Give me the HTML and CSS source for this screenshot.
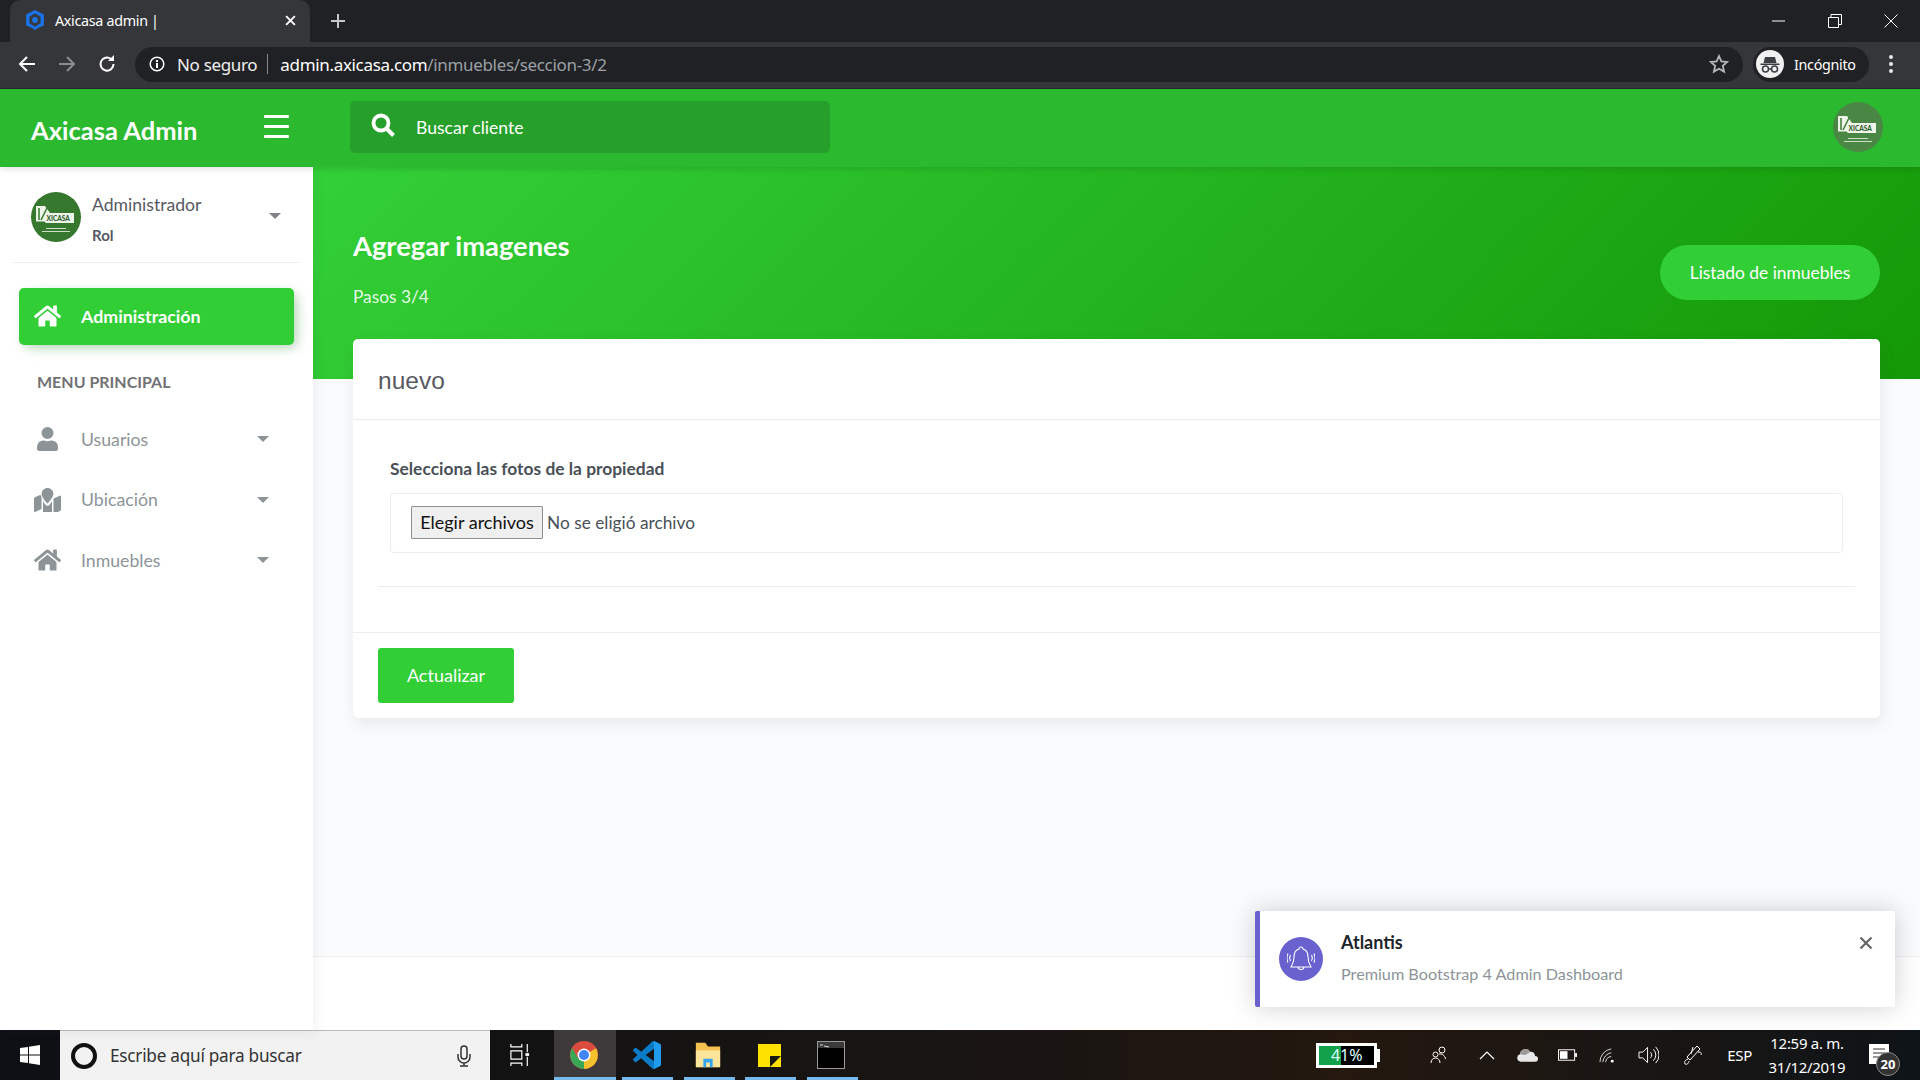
FILE: index.html
```html
<!DOCTYPE html>
<html lang="es">
<head>
<meta charset="utf-8">
<title>Axicasa admin</title>
<link rel="stylesheet" href="styles.css">
</head>
<body>
<svg class="defs" width="0" height="0">
  <symbol id="home" viewBox="0 0 576 512"><path d="M280 148 96 300v164a16 16 0 0 0 16 16l112-.3a16 16 0 0 0 16-16V368a16 16 0 0 1 16-16h64a16 16 0 0 1 16 16v95.6a16 16 0 0 0 16 16l112 .4a16 16 0 0 0 16-16V300L296 148a12 12 0 0 0-16 0zM572 251l-84-69V44a12 12 0 0 0-12-12h-56a12 12 0 0 0-12 12v72L318 43a48 48 0 0 0-61 0L4 251a12 12 0 0 0-2 17l26 31a12 12 0 0 0 17 2L280 107a12 12 0 0 1 16 0l235 194a12 12 0 0 0 17-2l26-31a12 12 0 0 0-2-17z"/></symbol>
  <symbol id="caret" viewBox="0 0 12 6"><path d="M0 0h12L6 6z"/></symbol>
</svg>

<header class="chrome-tabs">
  <div class="tab">
    <svg class="favicon" viewBox="0 0 16 18"><path d="M8 0 16 4v10l-5 2-3 2-3-2-5-2V4z" fill="#1a73e8"/><path d="M8 3 13 6v6l-5 3-5-3V6z" fill="#353a40"/><circle cx="8" cy="9" r="2.6" fill="#1a73e8"/></svg>
    <span class="tab-title">Axicasa admin |</span>
    <svg class="tab-close" viewBox="0 0 10 10"><path d="M1 1l8 8M9 1 1 9" stroke="#fff" stroke-width="1.7"/></svg>
  </div>
  <svg class="new-tab" viewBox="0 0 16 16"><path d="M8 1v14M1 8h14" stroke="#c5c7ca" stroke-width="2"/></svg>
  <div class="window-controls">
    <svg viewBox="0 0 14 14"><path d="M0 7h13" stroke="#fff"/></svg>
    <svg viewBox="0 0 14 14"><path d="M.5 3.500h10v10H.5zM3 3V.5h10.500v10H11" stroke="#fff" fill="none"/></svg>
    <svg viewBox="0 0 14 14"><path d="M.5.5l13 13M13.500.5l-13 13" stroke="#fff" fill="none"/></svg>
  </div>
</header>

<nav class="chrome-bar">
  <svg class="nav-icon" viewBox="0 0 18 18"><path d="M17 9H3M9 2 2 9l7 7" stroke="#fff" stroke-width="2" fill="none"/></svg>
  <svg class="nav-icon" viewBox="0 0 18 18"><path d="M1 9h14M9 2l7 7-7 7" stroke="#8a8c90" stroke-width="2" fill="none"/></svg>
  <svg class="nav-icon" viewBox="0 0 18 18"><path d="M15.500 9A6.500 6.500 0 1 1 13 4" stroke="#fff" stroke-width="2" fill="none"/><path d="M10 6h6V0z" fill="#fff"/></svg>
  <div class="omnibox">
    <svg class="info" viewBox="0 0 16 16"><circle cx="8" cy="8" r="6.800" stroke="#fff" stroke-width="1.500" fill="none"/><path d="M7 4h2v2H7zM7 7h2v5H7z" fill="#fff"/></svg>
    <span class="not-secure">No seguro</span>
    <span class="omni-sep"></span>
    <span class="url">admin.axicasa.com<span class="url-path">/inmuebles/seccion-3/2</span></span>
    <svg class="star" viewBox="0 0 20 20"><path d="m10 2 2.400 5.400 5.800.6-4.400 3.900 1.300 5.700L10 14.700l-5.100 2.900 1.300-5.700L1.800 8l5.800-.6z" stroke="#b5b7ba" stroke-width="1.800" fill="none"/></svg>
  </div>
  <div class="incognito">
    <svg class="incognito-icon" viewBox="0 0 28 28"><circle cx="14" cy="14" r="14" fill="#f1f1f1"/><path d="M9 7h10l1.500 6h-13zM4.500 13.500h19V15h-19z" fill="#3a3d42"/><circle cx="9.500" cy="19" r="3" stroke="#3a3d42" stroke-width="1.500" fill="none"/><circle cx="18.500" cy="19" r="3" stroke="#3a3d42" stroke-width="1.500" fill="none"/><path d="M12.500 19h3" stroke="#3a3d42" stroke-width="1.500"/></svg>
    <span>Incógnito</span>
  </div>
  <div class="kebab"><i></i><i></i><i></i></div>
</nav>

<div class="app-header">
  <div class="brand-wrap">
    <span class="brand">Axicasa Admin</span>
    <div class="burger"><i></i><i></i><i></i></div>
  </div>
  <div class="search">
    <svg class="search-icon" viewBox="0 0 24 24"><circle cx="10" cy="10" r="7.500" stroke="#fff" stroke-width="3.800" fill="none"/><path d="m15.500 15.500 7 7" stroke="#fff" stroke-width="4"/></svg>
    <span>Buscar cliente</span>
  </div>
  <svg class="header-avatar" viewBox="0 0 50 50">
    <circle class="logo-disc" cx="25" cy="25" r="25"/>
    <path d="M5 14h9l5 7h24v10H15l-1.500-1.500H5z" fill="#eef4ea"/>
    <path d="M8 16v12M10 28l6-12" stroke="#3b7a35" stroke-width="1.500" fill="none"/>
    <text x="15.500" y="29" class="logo-text">XICASA</text>
    <rect x="15" y="36" width="20" height="1" fill="#cfe0ca"/><rect x="11" y="39" width="28" height="1" fill="#cfe0ca"/>
  </svg>
</div>

<div class="layout">
  <aside class="sidebar">
    <div class="user">
      <svg class="user-avatar" viewBox="0 0 50 50">
        <circle class="logo-disc" cx="25" cy="25" r="25"/>
        <path d="M5 14h9l5 7h24v10H15l-1.500-1.500H5z" fill="#eef4ea"/>
        <path d="M8 16v12M10 28l6-12" stroke="#2f7a2d" stroke-width="1.500" fill="none"/>
        <text x="15.500" y="29" class="logo-text">XICASA</text>
        <rect x="15" y="36" width="20" height="1" fill="#cfe0ca"/><rect x="11" y="39" width="28" height="1" fill="#cfe0ca"/>
      </svg>
      <div class="user-info">
        <span class="user-name">Administrador</span>
        <span class="user-role">Rol</span>
      </div>
      <svg class="caret user-caret"><use href="#caret"/></svg>
    </div>
    <div class="menu-active">
      <svg class="menu-icon"><use href="#home"/></svg>
      <span>Administración</span>
    </div>
    <div class="menu-title">MENU PRINCIPAL</div>
    <div class="menu-item">
      <svg class="menu-icon" viewBox="0 0 448 512"><path d="M224 256a128 128 0 1 0 0-256 128 128 0 0 0 0 256zm90 32h-17a174 174 0 0 1-146 0h-17A134 134 0 0 0 0 422v42a48 48 0 0 0 48 48h352a48 48 0 0 0 48-48v-42a134 134 0 0 0-134-134z"/></svg>
      <span>Usuarios</span>
      <svg class="caret"><use href="#caret"/></svg>
    </div>
    <div class="menu-item">
      <svg class="menu-icon" viewBox="0 0 576 512"><path d="M288 0c-69 0-126 56-126 126 0 56 82 158 113 196a16 16 0 0 0 25 0c31-38 114-140 114-196C414 56 357 0 288 0zM20 195A32 32 0 0 0 0 225v271c0 11 11 19 22 15l138-63V192c-9-16-16-32-21-47zm268 184c-14 0-27-6-37-18-19-24-40-51-59-78v229l192 64V283c-19 27-40 54-59 78-10 12-23 18-37 18zm266-216-138 63v320l140-56a32 32 0 0 0 20-30V178c0-11-11-19-22-15z"/></svg>
      <span>Ubicación</span>
      <svg class="caret"><use href="#caret"/></svg>
    </div>
    <div class="menu-item">
      <svg class="menu-icon"><use href="#home"/></svg>
      <span>Inmuebles</span>
      <svg class="caret"><use href="#caret"/></svg>
    </div>
  </aside>

  <main class="content">
    <section class="banner">
      <div>
        <h1>Agregar imagenes</h1>
        <p>Pasos 3/4</p>
      </div>
      <a class="pill">Listado de inmuebles</a>
    </section>
    <section class="card">
      <div class="card-head">nuevo</div>
      <div class="card-body">
        <label class="field-label">Selecciona las fotos de la propiedad</label>
        <div class="file-box">
          <span class="file-btn">Elegir archivos</span>
          <span class="file-name">No se eligió archivo</span>
        </div>
        <hr class="rule">
      </div>
      <div class="card-foot"><a class="submit">Actualizar</a></div>
    </section>
    <div class="spacer"></div>
    <footer class="page-foot"></footer>
  </main>
</div>

<div class="toast">
  <div class="toast-icon">
    <svg viewBox="0 0 28 30"><g stroke="#fff" stroke-width="1.100" fill="none"><path d="M14 3a2 2 0 0 0-2 2c-4 1-5 4-5 8 0 5-1 7-3 10h20c-2-3-3-5-3-10 0-4-1-7-5-8a2 2 0 0 0-2-2zM11 23a3 2.500 0 0 0 6 0"/><path d="M3.500 11q-1.500 3 0 6M1 9.500q-2 4.500 0 9M24.500 11q1.500 3 0 6M27 9.500q2 4.500 0 9"/></g></svg>
  </div>
  <div class="toast-text">
    <strong>Atlantis</strong>
    <span>Premium Bootstrap 4 Admin Dashboard</span>
  </div>
  <svg class="toast-close" viewBox="0 0 14 14"><path d="M1.500 1.500l11 11M12.500 1.500l-11 11" stroke="#666" stroke-width="2.200"/></svg>
</div>

<div class="taskbar">
  <div class="start">
    <svg viewBox="0 0 20 20"><path d="M0 3l8-1v7.500H0zM9 1.800 20 0v9.500H9zM0 10.500h8V18l-8-1zM9 10.500h11V20L9 18.200z" fill="#fff"/></svg>
  </div>
  <div class="task-search">
    <span class="cortana"></span>
    <span class="task-search-text">Escribe aquí para buscar</span>
    <svg class="mic" viewBox="0 0 14 22"><rect x="4" y="1" width="6" height="13" rx="3" fill="none" stroke="#333" stroke-width="1.500"/><path d="M1 9v3a6 6 0 0 0 12 0V9M7 18v3M3 21h8" stroke="#333" stroke-width="1.500" fill="none"/></svg>
  </div>
  <div class="task-apps">
    <div class="app app-view"><svg viewBox="0 0 22 24"><path d="M1 0v3h12V0M1 24v-3h12v3M1 7.500h12v9H1zM19 0v9M19 14v10" stroke="#fff" stroke-width="1.300" fill="none"/><rect x="17" y="10" width="4" height="3" fill="#fff"/></svg></div>
    <div class="app app-chrome"><svg viewBox="0 0 28 28"><circle cx="14" cy="14" r="14" fill="#dd4b3e"/><path d="M14 14 2 7A14 14 0 0 0 14 28z" fill="#3aa757"/><path d="M14 14v14A14 14 0 0 0 26 7z" fill="#f5c12e"/><path d="M14 14 26.100 7H14zM14 14 2 7l6 10z" fill="#dd4b3e"/><path d="M14 14l-6 3 6 11z" fill="#3aa757"/><path d="M14 14l6 3-6 11z" fill="#f5c12e"/><circle cx="14" cy="14" r="6.500" fill="#fff"/><circle cx="14" cy="14" r="5" fill="#4285f4"/></svg></div>
    <div class="app app-on"><svg viewBox="0 0 24 24"><path d="M23.150 2.587 18.210.21a1.494 1.494 0 0 0-1.705.29l-9.460 8.630-4.120-3.128a.999.999 0 0 0-1.276.057L.327 7.261A1 1 0 0 0 .326 8.740L3.899 12 .326 15.260a1 1 0 0 0 .001 1.479L1.650 17.940a.999.999 0 0 0 1.276.057l4.120-3.128 9.460 8.630a1.492 1.492 0 0 0 1.704.29l4.942-2.377A1.500 1.500 0 0 0 24 20.060V3.939a1.500 1.500 0 0 0-.850-1.352zm-5.146 14.861L10.826 12l7.178-5.448v10.896z" fill="#0a7cc7"/><path d="M18 0v6.550V17.450V24l5.150-2.500A1.500 1.500 0 0 0 24 20.060V3.940a1.500 1.500 0 0 0-.850-1.350z" fill="#1f9cf0"/></svg></div>
    <div class="app app-on"><svg viewBox="0 0 28 30"><path d="M1 2h10l3 4h13v22H1z" fill="#f2c14e"/><path d="M1 10h26v18H1z" fill="#fde59b"/><path d="M9 28v-9h10v9h-3v-5h-4v5z" fill="#37a6ee"/></svg></div>
    <div class="app app-on app-sticky"><svg viewBox="0 0 23 23"><path d="M0 0h23v23H0z" fill="#ffe100"/><path d="M12 12h11L12 23z" fill="#1a1a10"/></svg></div>
    <div class="app app-on"><svg viewBox="0 0 28 28"><rect x=".5" y=".5" width="27" height="27" fill="#000" stroke="#9a9a9a"/><path d="M1 1h26v6H1z" fill="#3b3b3b"/><path d="M3 4h3M7 5l5 1" stroke="#ddd" fill="none"/></svg></div>
  </div>
  <div class="tray">
    <div class="battery-widget">
      <div class="battery-body"><span class="battery-fill"></span><span class="battery-text">41%</span></div>
      <i class="battery-tip"></i>
    </div>
    <svg class="tray-icon people" viewBox="0 0 20 20"><circle cx="13" cy="5" r="3" stroke="#fff" fill="none"/><circle cx="6.500" cy="9.500" r="2.500" stroke="#fff" fill="none"/><path d="M2 18c0-3 2-5 4.500-5s4.500 2 4.500 5M10 9c3-.5 6 1.500 6.500 5" stroke="#fff" fill="none"/></svg>
    <svg class="tray-icon chevron" viewBox="0 0 16 10"><path d="M1 9l7-7 7 7" stroke="#fff" stroke-width="1.200" fill="none"/></svg>
    <svg class="tray-icon cloud" viewBox="0 0 22 14"><path d="M4 14a4 4 0 0 1-1-7.800A6 6 0 0 1 14 3.500a5 5 0 0 1 5 4.500 3 3 0 0 1 0 6z" fill="#e8e8e8"/><path d="M3 6.200A6 6 0 0 1 14 3.500L9 7z" fill="#9a9a9a"/></svg>
    <svg class="tray-icon batt" viewBox="0 0 20 12"><rect x=".5" y=".5" width="17" height="11" fill="none" stroke="#fff"/><rect x="2" y="2" width="8" height="8" fill="#fff"/><rect x="18" y="4" width="2" height="4" fill="#fff"/></svg>
    <svg class="tray-icon wifi" viewBox="0 0 18 18"><path d="M1 16A14 14 0 0 1 13 2M4 16A11 11 0 0 1 13 6M7 16a7 7 0 0 1 6-6" stroke="#ddd" fill="none"/><circle cx="14" cy="15" r="1.500" fill="#fff"/></svg>
    <svg class="tray-icon sound" viewBox="0 0 22 20"><path d="M1 7h4l5-5v16l-5-5H1z" stroke="#fff" fill="none"/><path d="M13 7a4 4 0 0 1 0 6M16 4a8 8 0 0 1 0 12M18.500 1.500a12 12 0 0 1 0 17" stroke="#fff" fill="none"/></svg>
    <svg class="tray-icon pen" viewBox="0 0 20 22"><path d="M14 2l3 3L7 16l-3-3zM10 3l-2 7M15 8c3 0 4 1 3 3M5 15c-3 1-4 3-3 5 2 1 4-1 4-3" stroke="#fff" fill="none"/></svg>
    <span class="lang">ESP</span>
    <div class="clock"><span>12:59 a. m.</span><span>31/12/2019</span></div>
    <div class="notif">
      <svg viewBox="0 0 20 20"><path d="M0 0h20v20H0z" fill="#fff"/><path d="M4 5h12M4 9h12M4 13h9" stroke="#333"/></svg>
      <span class="notif-badge">20</span>
    </div>
  </div>
</div>
</body>
</html>
```

FILE: styles.css
```css
* { box-sizing: border-box; }
html, body { margin: 0; height: 100%; overflow: hidden; }
body {
  position: relative;
  display: flex;
  flex-direction: column;
  width: 1920px;
  height: 1080px;
  font-family: Lato, "Liberation Sans", sans-serif;
  color: #575962;
  background: #f9fbfd;
}
.defs { position: absolute; }
.logo-disc { fill: #37782f; }
.header-avatar .logo-disc { fill: #4a8745; }
.logo-text { font: 900 6.500px Lato, sans-serif; fill: #2e5f2b; }

/* browser frame */
.chrome-tabs {
  flex: none;
  height: 42px;
  display: flex;
  align-items: stretch;
  background: #202124;
  font-family: "Noto Sans", sans-serif;
}
.tab {
  width: 300px;
  margin-left: 10px;
  background: #35363a;
  border-radius: 10px 10px 0 0;
  display: flex;
  align-items: center;
  padding: 0 10px 2px 16px;
  color: #fff;
  font-size: 14.300px;
  letter-spacing: -0.3px;
}
.favicon { width: 18px; height: 20px; }
.tab-title { margin-left: 11px; flex: 1; }
.tab-close { width: 11px; height: 11px; margin-right: 4px; }
.new-tab { width: 16px; height: 16px; margin: 13px 0 0 20px; }
.window-controls { margin-left: auto; display: flex; align-items: flex-start; gap: 42px; padding: 14px 22px 0 0; }
.window-controls svg { width: 14px; height: 14px; }

.chrome-bar {
  flex: none;
  height: 47px;
  display: flex;
  align-items: center;
  background: #35363a;
  border-bottom: 1px solid #26272a;
  padding: 0 10px 2px 18px;
  font-family: "Noto Sans", sans-serif;
  color: #fff;
}
.nav-icon { width: 18px; height: 18px; margin-right: 22px; }
.nav-icon:nth-child(3) { margin-right: 19px; }
.omnibox {
  width: 1608px;
  height: 35px;
  border-radius: 18px;
  background: #202124;
  display: flex;
  align-items: center;
  padding: 0 14px;
  font-size: 17px;
  letter-spacing: -0.33px;
}
.info { width: 16px; height: 16px; margin-right: 12px; }
.not-secure { color: #f0f0f0; }
.omni-sep { width: 1px; height: 20px; background: #85878a; margin: 0 12px 0 10px; }
.url { color: #fff; }
.url-path { color: #9aa0a6; }
.star { width: 20px; height: 20px; margin-left: auto; }
.incognito {
  margin-left: 10px;
  width: 116px;
  height: 35px;
  border-radius: 18px;
  background: #202124;
  display: flex;
  align-items: center;
  padding-left: 3px;
  font-size: 14.300px;
  letter-spacing: -0.3px;
}
.incognito-icon { width: 28px; height: 28px; margin-right: 10px; }
.kebab { margin-left: 20px; display: flex; flex-direction: column; gap: 3px; }
.kebab i { width: 4px; height: 4px; border-radius: 50%; background: #e8e8e8; }

/* app header */
.app-header {
  flex: none;
  height: 78px;
  display: flex;
  align-items: center;
  background: #2bb930;
  position: relative;
  z-index: 2;
  box-shadow: 0 2px 6px rgba(0,0,0,.12);
}
.brand-wrap { width: 350px; display: flex; align-items: center; padding: 4px 0 0 31px; }
.brand { width: 233px; color: #fff; font-size: 25.500px; font-weight: 700; }
.burger { display: flex; flex-direction: column; gap: 7px; margin-top: -8px; }
.burger i { width: 25px; height: 3px; background: #fff; border-radius: 1px; }
.search {
  width: 480px;
  height: 52px;
  margin-top: -2px;
  border-radius: 5px;
  background: #27a02b;
  display: flex;
  align-items: center;
  padding-left: 21px;
  color: #fff;
  font-size: 17.600px;
}
.search-icon { width: 24px; height: 24px; margin: -4px 21px 0 0; }
.header-avatar { width: 50px; height: 50px; margin: -2px 37px 0 auto; }

/* layout */
.layout { flex: 1; min-height: 0; display: flex; }
.sidebar {
  flex: none;
  width: 313px;
  background: #fff;
  box-shadow: 4px 4px 10px rgba(69,65,78,.06);
  position: relative;
  z-index: 1;
  padding: 25px 13px 0;
}
.user {
  display: flex;
  align-items: center;
  padding: 0 19px 20px 18px;
  border-bottom: 1px solid #eee;
  box-sizing: content-box;
  height: 50px;
}
.user-avatar { width: 50px; height: 50px; flex: none; }
.user-info { display: flex; flex-direction: column; margin-left: 11px; flex: 1; padding-top: 7px; }
.user-name { font-size: 17.600px; line-height: 26px; color: #575962; margin-top: -4px; }
.user-role { font-size: 15px; font-weight: 700; line-height: 20px; margin-top: 7px; color: #575962; }
.caret { width: 12px; height: 6px; fill: #83848a; flex: none; }
.user-caret { margin-top: -2px; }
.menu-active {
  margin: 25px 6px 0;
  height: 57px;
  border-radius: 5px;
  background: #31ce36;
  box-shadow: 4px 4px 10px 0 rgba(0,0,0,.1), 4px 4px 15px -5px rgba(49,206,54,.4);
  display: flex;
  align-items: center;
  padding: 0 0 2px 15px;
  color: #fff;
  font-size: 17.800px;
  font-weight: 700;
}
.menu-icon { width: 27px; height: 24px; margin-right: 20px; fill: currentColor; flex: none; }
.menu-title { margin: 28px 0 0 24px; height: 18px; line-height: 18px; font-size: 16px; font-weight: 700; color: #727275; }
.menu-item {
  display: flex;
  align-items: center;
  height: 60.500px;
  padding: 0 31px 0 21px;
  color: #8d9498;
  font-size: 17.700px;
}
.menu-title + .menu-item { margin-top: 18px; }
.menu-item span { flex: 1; }
.menu-item .menu-icon { margin-right: 20px; }
.menu-item .caret { fill: #8d9498; }

/* content */
.content { flex: 1; min-width: 0; display: flex; flex-direction: column; }
.banner {
  flex: none;
  height: 212px;
  padding: 50px 40px 0;
  display: flex;
  justify-content: space-between;
  align-items: flex-start;
  color: #fff;
  background: linear-gradient(-45deg, #149806 0%, #33d038 100%);
}
.banner h1 { margin: 13px 0 0; font-size: 27.300px; line-height: 32px; font-weight: 700; }
.banner p { margin: 24px 0 0; font-size: 17.300px; line-height: 22px; color: rgba(255,255,255,.9); }
.pill {
  margin-top: 28px;
  width: 220px;
  height: 55px;
  border-radius: 28px;
  background: #31ce36;
  display: flex;
  align-items: center;
  justify-content: center;
  padding-bottom: 1px;
  color: #fff;
  font-size: 17.400px;
}
.card {
  flex: none;
  position: relative;
  margin: -40px 40px 0;
  height: 379px;
  background: #fff;
  border-radius: 5px;
  box-shadow: 2px 6px 15px rgba(69,65,78,.1);
  display: flex;
  flex-direction: column;
}
.card-head {
  height: 81px;
  padding: 24px 25px 0;
  border-bottom: 1px solid #ebecec;
  font-family: "Liberation Sans", sans-serif;
  font-size: 24.500px;
  line-height: 36px;
  color: #575962;
}
.card-body { height: 213px; padding: 35.500px 25px 0; border-bottom: 1px solid #ebecec; }
.field-label { display: block; margin-left: 12px; font-size: 17.400px; font-weight: 700; line-height: 26px; color: #495057; }
.file-box {
  margin: 11px 12px 0;
  height: 60px;
  border: 1px solid #ebedf2;
  border-radius: 4px;
  display: flex;
  align-items: center;
  padding-left: 20px;
  font-size: 17.300px;
  color: #495057;
}
.file-btn {
  width: 132px;
  height: 33px;
  border: 1px solid #8f8f8f;
  border-radius: 1px;
  background: #efefef;
  color: #111;
  display: flex;
  align-items: center;
  justify-content: center;
  padding-bottom: 2px;
  font-size: 18px;
  margin-right: 4px;
}
.rule { margin: 33px 0 0; border: 0; border-top: 1px solid #ebecec; }
.card-foot { padding: 15px 25px 0; }
.submit {
  width: 136px;
  height: 55px;
  border-radius: 3px;
  background: #31ce36;
  color: #fff;
  font-size: 18px;
  padding-bottom: 2px;
  display: flex;
  align-items: center;
  justify-content: center;
}
.spacer { flex: 1; }
.page-foot { flex: none; height: 74px; background: #fff; border-top: 1px solid #eee; }

/* toast */
.toast {
  position: absolute;
  left: 1255px;
  top: 911px;
  width: 640px;
  height: 96px;
  background: #fff;
  border-left: 5px solid #6861ce;
  box-shadow: 0 0 24px rgba(69,65,78,.25);
  border-radius: 2px;
  display: flex;
  align-items: flex-start;
  padding: 26px 0 0 19px;
}
.toast-icon {
  width: 44px;
  height: 44px;
  border-radius: 50%;
  background: #6861ce;
  display: flex;
  align-items: center;
  justify-content: center;
  flex: none;
}
.toast-icon svg { width: 28px; height: 30px; }
.toast-text { margin: -7px 0 0 18px; display: flex; flex-direction: column; flex: 1; }
.toast-text strong { font-size: 18px; font-weight: 700; color: #212529; line-height: 24px; }
.toast-text span { margin-top: 9px; font-size: 16.200px; color: #8d9498; line-height: 22px; }
.toast-close { width: 14px; height: 14px; margin: -1px 22px 0 0; }

/* taskbar */
.taskbar {
  flex: none;
  height: 50px;
  display: flex;
  align-items: stretch;
  background: linear-gradient(90deg, #0d1014 0%, #1a1512 55%, #24180f 70%, #0f1418 100%);
  color: #fff;
  font-family: "Noto Sans", sans-serif;
}
.start { width: 60px; display: flex; align-items: center; justify-content: center; }
.start svg { width: 20px; height: 20px; }
.task-search {
  width: 430px;
  background: #f2f2f2;
  border-top: 1px solid #b8b8b8;
  display: flex;
  align-items: center;
  padding-left: 11px;
  color: #333;
  font-size: 17.200px;
  letter-spacing: -0.25px;
}
.cortana { width: 26px; height: 26px; border: 4px solid #111; border-radius: 50%; flex: none; }
.task-search-text { margin-left: 13px; flex: 1; }
.mic { width: 14px; height: 22px; margin-right: 19px; }
.task-apps { display: flex; align-items: stretch; }
.app {
  display: flex;
  align-items: center;
  justify-content: center;
  position: relative;
}
.app svg { width: 28px; height: 28px; }
.app-view { width: 64px; padding-right: 4px; }
.app-view svg { width: 20px; height: 22px; }
.app-chrome { background: #3e3a3b; width: 62px; padding-right: 2px; }
.app-chrome::after, .app-on::after {
  content: "";
  position: absolute;
  left: 0;
  right: 0;
  bottom: 0;
  height: 3px;
  background: #76b9ed;
}
.app-on { width: 51px; margin-left: 10.500px; padding-right: 2px; }
.app-on:nth-child(3) { margin-left: 6px; }
.app-sticky svg { width: 23px; height: 23px; }
.tray { margin-left: auto; display: flex; align-items: center; padding-right: 23px; }
.battery-widget { display: flex; align-items: center; margin-right: 49px; }
.battery-body { width: 61px; height: 25px; border: 3px solid #fff; background: #000; position: relative; display: flex; }
.battery-fill { width: 22px; background: #12a04a; }
.battery-text { position: absolute; inset: 0; text-align: center; font-size: 16px; line-height: 19px; color: #dff; }
.battery-tip { width: 3px; height: 13px; background: #fff; }
.tray-icon { flex: none; }
.people { width: 20px; height: 20px; margin-right: 30px; }
.chevron { width: 16px; height: 10px; margin-right: 22px; }
.cloud { width: 21px; height: 14px; margin-right: 20px; }
.batt { width: 19px; height: 12px; margin-right: 22px; }
.wifi { width: 17px; height: 17px; margin-right: 22px; }
.sound { width: 21px; height: 20px; margin-right: 24px; }
.pen { width: 20px; height: 22px; margin-right: 24px; }
.lang { font-size: 15px; letter-spacing: -0.3px; margin-right: 17px; }
.clock { display: flex; flex-direction: column; align-items: center; font-size: 15px; letter-spacing: -0.3px; line-height: 24px; width: 76px; margin-right: 24px; }
.notif { position: relative; width: 20px; height: 20px; margin: -3px 8px 0 0; }
.notif svg { width: 20px; height: 20px; display: block; }
.notif-badge {
  position: absolute;
  left: 7px;
  top: 8px;
  width: 24px;
  height: 24px;
  border-radius: 50%;
  border: 1px solid #888;
  background: #333;
  font-size: 13px;
  font-weight: 700;
  line-height: 22px;
  text-align: center;
}
```
